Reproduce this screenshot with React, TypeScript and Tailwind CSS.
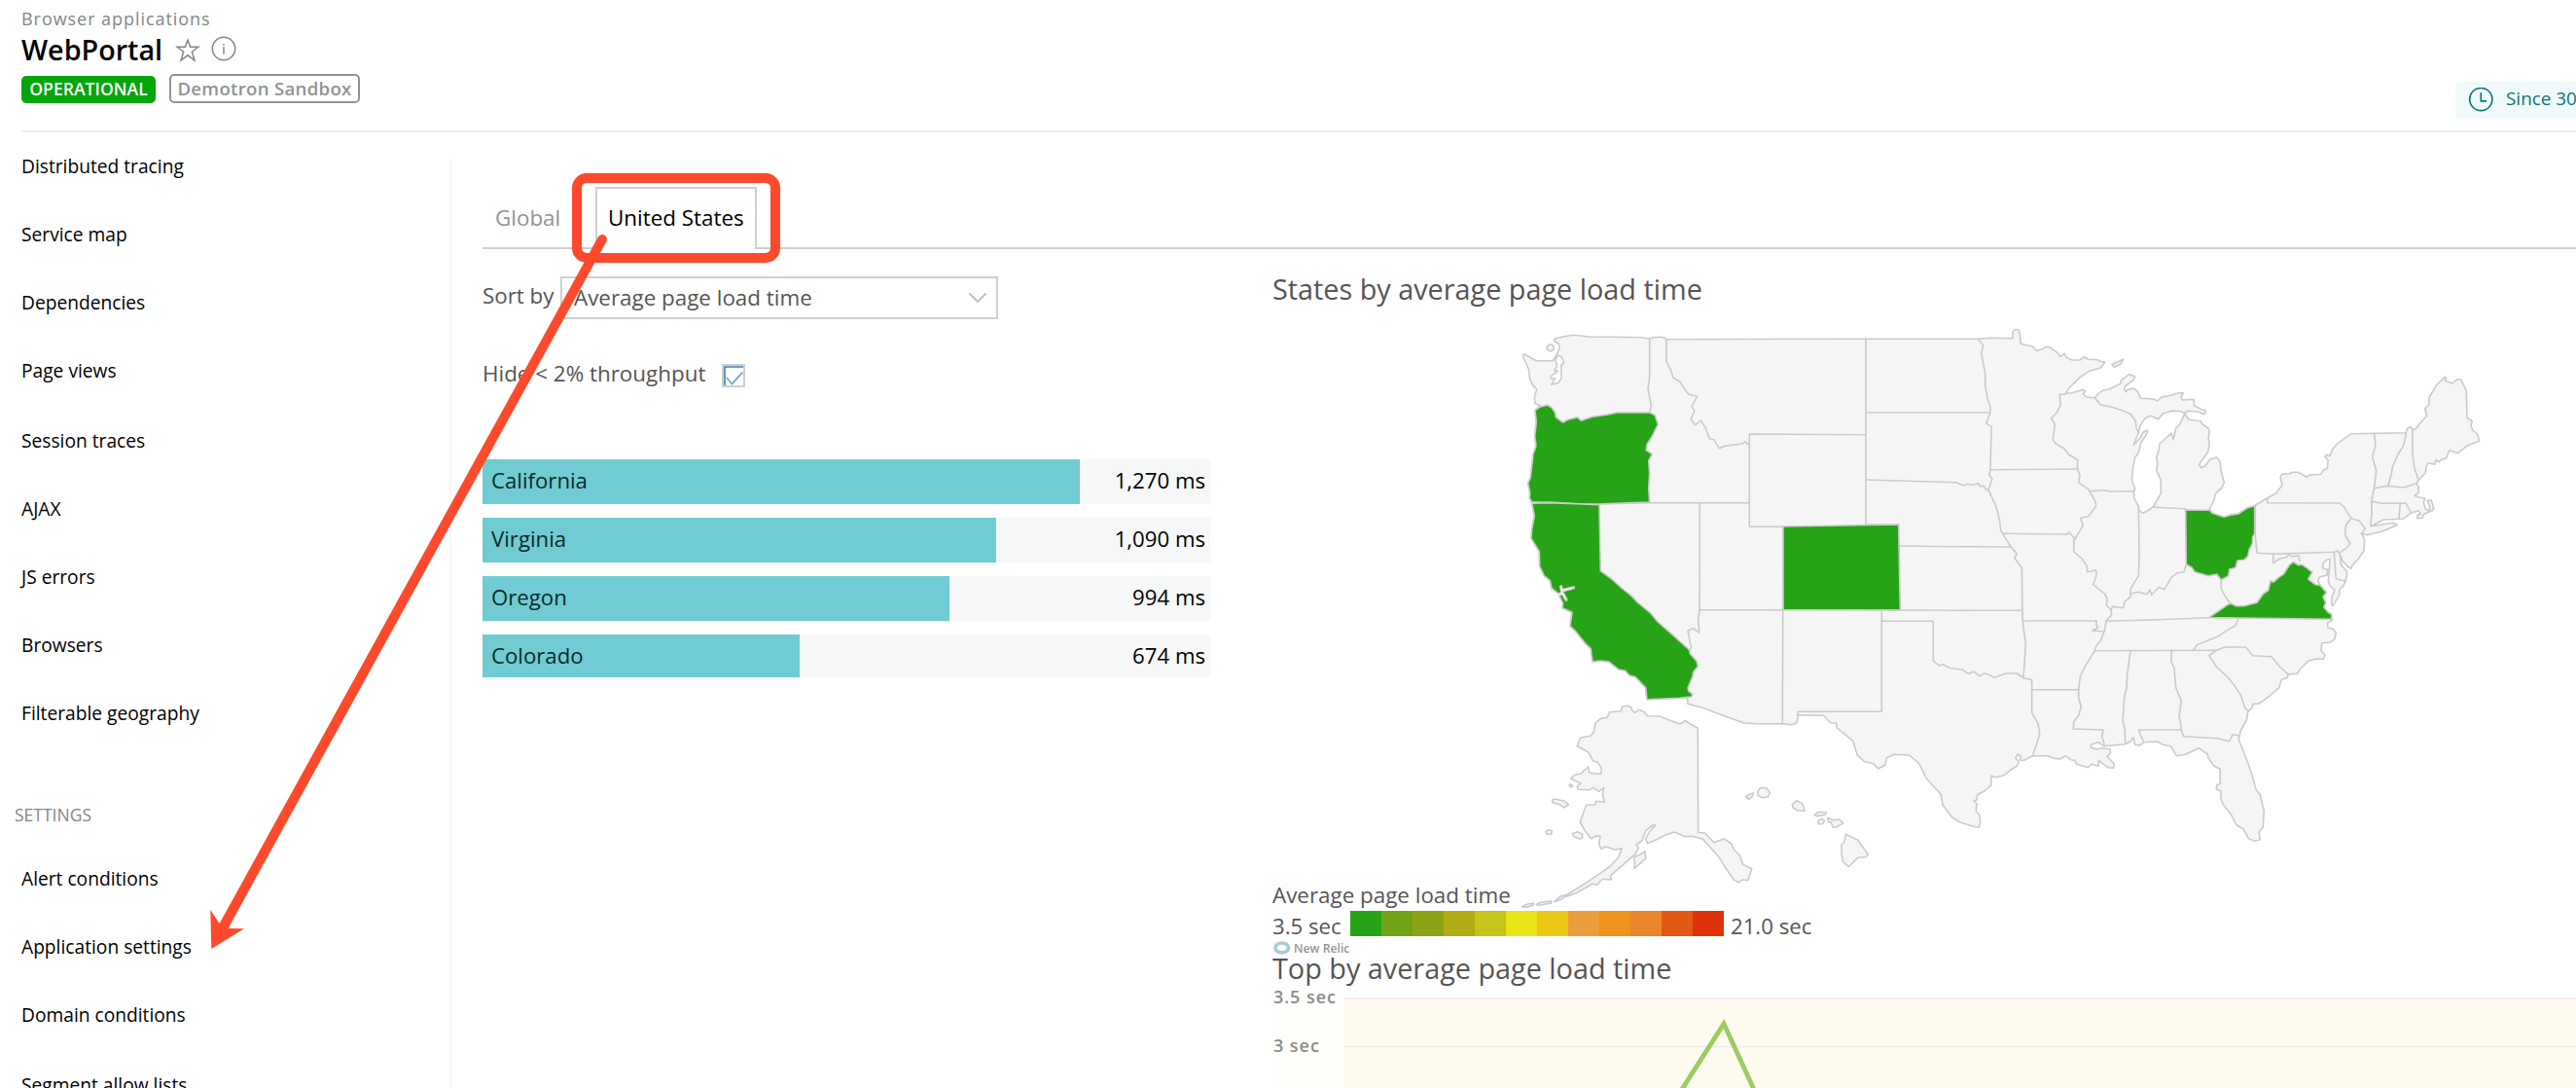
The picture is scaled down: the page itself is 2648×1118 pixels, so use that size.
import type { ReactNode } from "react";

/* ------------------------------------------------------------------ */
/* US map geometry                                                     */
/* ------------------------------------------------------------------ */

type Tile = { x: number; y: number; sx: number; sy: number };

// The outline data is stored in tiles, each with its own origin and scale.
const west: Tile = { x: 1540, y: 320, sx: 1 / 3, sy: 1 / 3 };
const central: Tile = { x: 1880, y: 320, sx: 1 / 3, sy: 1 / 3 };
const northeast: Tile = { x: 2200, y: 320, sx: 1 / 3, sy: 1 / 3 };
const southeast: Tile = { x: 2060, y: 560, sx: 1 / 3, sy: 1 / 3 };
const south: Tile = { x: 1540, y: 700, sx: 0.3699, sy: 1 / 3 };

function pts(tile: Tile, data: string): string {
  return data
    .trim()
    .split(/\s+/)
    .map((pair) => {
      const [px, py] = pair.split(",").map(Number);
      return `${(tile.x + px * tile.sx).toFixed(1)},${(tile.y + py * tile.sy).toFixed(1)}`;
    })
    .join(" ");
}

const mainland = [
  pts(west, "172,88 178,83 200,78 230,73 255,75 280,78 360,79 440,80 467,84 480,80 500,79 512,81 519,86"),
  pts(
    central,
    "0,85 460,85 500,82 566,83 568,62 573,56 584,56 588,66 592,100 628,108 640,121 655,118 668,109 680,110 694,120 704,126 713,138 720,136 726,130 733,142 750,150 775,150 787,140 800,148 830,149 836,154 852,156 838,174 803,184 775,203 745,232 730,252 748,252 784,241 790,246 784,254 795,264 820,266 830,254 848,242 864,240 899,223 902,212 926,194 944,201 938,213 914,230 911,240 916,248 922,241 940,238 952,246 962,268 1000,270 1014,276 1025,264 1048,260 1080,251",
  ),
  pts(
    northeast,
    "133,251 126,265 130,273 165,271 167,290 190,303 200,304 202,312 196,317 180,310 150,307 138,312 138,316 150,333 188,339 190,346 210,360 214,372 210,388 214,412 208,436 185,466 182,474 188,482 200,476 216,456 236,450 246,462 250,495 259,527 253,542 232,562 228,582 214,609 222,622 258,634 280,626 303,623 330,606 355,598 392,575 420,560 438,535 432,510 438,502 460,500 468,496 487,496 515,511 522,504 557,502 564,490 577,484 580,458 570,448 574,442 584,446 594,424 610,406 650,377 820,374 824,360 834,356 840,366 852,360 865,342 884,322 878,300 890,288 891,266 913,228 940,202 944,206 940,213 962,222 978,209 990,211 1006,245 1008,328 1024,338 1020,350 1025,366 1040,378 1046,400 1010,413 980,437 953,428 944,452 926,458 922,464 912,458 908,472 888,467 882,478 880,498 862,516 852,530 859,542 858,560 846,568 862,574 878,575 874,590 880,610 890,614 894,603 886,582 898,582 905,606 900,614 876,624 870,637 854,638 856,626 866,626 858,614 834,622 810,640 750,642 712,662 750,656 780,652 792,658 770,668 745,679 700,689 682,684 692,703 690,738 672,764 656,780 650,793 640,786 625,770 617,752",
  ),
  pts(
    southeast,
    "1038,45 1040,62 1056,80 1058,94 1048,125 1034,138 1034,155 1014,188 1010,184 1011,160 1020,140 1005,125 1000,110 1003,78 1006,44 996,44 984,58 984,72 998,76 996,94 975,98 968,110 975,124 994,146 984,160 992,178 986,192 1000,208 1010,214 1012,232 998,240 998,256 1014,258 1024,270 1020,290 1006,300 980,302 978,325 990,340 984,352 966,350 938,358 914,382 904,397 878,398 872,410 856,415 848,440 820,465 785,490 768,490 765,502 753,512 748,540 730,572 724,600 740,640 762,700 778,755 790,770 802,820 799,870 786,885 790,908 775,913 755,906 738,876 716,862 700,830 676,800 668,780 670,760 655,752 656,740 667,736 666,690 648,682 630,656 628,645 600,626 560,646 532,650 514,620 490,616 474,606 432,608 418,618 404,616 399,594 390,606 374,614 330,618 308,620 290,608 270,614 268,624 285,630 305,626 328,630 328,642 318,652 340,675 338,688 320,686 292,664 290,682 270,676 260,686 224,676 218,664 206,662 190,650 172,660 155,658 136,650 88,650 62,664 50,664 50,650 42,646 35,656 46,668 40,682 20,694 0,710",
  ),
  pts(
    south,
    "1385,296 1370,292 1370,320 1355,336 1332,350 1330,366 1322,368 1330,378 1328,402 1338,412 1340,436 1336,450 1326,449 1285,436 1262,420 1236,382 1230,348 1190,300 1170,254 1142,228 1100,226 1080,236 1076,258 1056,270 1044,254 1018,248 998,228 986,184 942,144 940,130 924,128 904,106 834,104 830,128 816,134 790,131 720,131 684,129 600,95 575,84 527,70 526,52",
  ),
  pts(
    west,
    "560,1192 510,1194 459,1196 455,1160 424,1127 405,1122 392,1108 372,1104 342,1080 315,1077 291,1080 286,1040 270,1025 238,985 222,970 228,928 198,914 200,900 186,870 165,853 160,830 142,815 128,785 127,740 102,700 104,670 112,630 104,592 97,575 98,560 92,530 100,512 108,440 117,415 113,385 118,340 114,305 130,290 114,284 112,265 116,250 120,240 108,230 97,206 95,180 76,138 80,131 118,152 168,152 182,132 190,108 186,98 176,94",
  ),
].join(" ");

const water = [
  pts(
    central,
    "955,373 960,352 975,330 992,322 1016,332 1030,315 1060,306 1086,308 1098,314 1084,345 1070,360 1062,395 1056,376 1040,390 1020,408 1018,425 1010,450 1014,470 1010,490 1024,520 1024,560 1002,600 990,610 970,622 958,616 955,600 942,578 940,560 944,545 934,520 938,480 944,450 955,435 962,405 980,378 983,366 970,372 960,390 940,412 946,395",
  ),
  pts(west, "184,136 176,150 182,168 174,182 184,184 162,200 164,208 176,206 164,226 186,220 196,205 194,166 203,158 196,140"),
];

const islands = [
  pts(west, "150,110 160,101 170,105 172,118 162,123 152,118"),
  pts(central, "873,163 890,156 909,147 900,162 880,172"),
  pts(
    south,
    "345,78 360,76 370,80 372,90 380,97 390,88 405,94 415,107 450,108 475,120 500,130 506,132 520,122 555,145 556,466 575,468 600,497 628,486 648,500 655,518 672,538 680,565 705,578 694,614 680,612 668,620 655,612 630,572 612,540 568,486 540,478 520,479 490,465 465,474 440,488 415,500 410,486 420,465 437,444 430,444 410,460 400,492 384,504 390,514 382,532 345,568 312,600 315,612 290,610 274,628 262,625 215,654 190,664 185,662 240,625 310,572 334,544 344,515 325,520 300,510 286,517 280,500 284,478 272,477 258,485 242,462 228,434 245,382 270,380 272,370 296,373 290,350 294,328 280,340 265,328 255,335 222,334 220,323 230,315 202,300 212,289 230,285 250,263 254,283 286,286 287,268 276,250 264,246 250,218 220,200 228,175 258,168 266,155 270,130 285,115 303,112 310,95 342,92",
  ),
  pts(south, "150,366 158,363 185,370 196,380 182,390 172,380 152,374"),
  pts(south, "198,318 206,320 206,326 199,324"),
  pts(south, "132,464 140,458 150,462 148,472 136,472"),
  pts(south, "206,470 220,464 234,472 234,484 226,486 212,480"),
  pts(south, "408,524 410,546 396,560 378,578 380,566 378,542 396,534"),
  pts(south, "156,680 175,662 186,660 180,670 160,679"),
  pts(south, "106,688 120,681 148,678 148,684 112,691"),
  pts(south, "66,696 80,688 99,685 98,690 80,697"),
  pts(south, "688,356 700,348 709,345 706,356 696,364"),
  pts(south, "722,338 730,328 746,329 756,344 750,356 734,359 722,352"),
  pts(south, "817,380 830,368 846,378 852,400 832,398 820,390"),
  pts(south, "878,412 890,403 912,404 908,412 886,416"),
  pts(south, "890,430 898,424 907,430 902,440 890,440"),
  pts(south, "916,421 930,428 948,426 959,437 940,450 930,450 926,436 918,434"),
  pts(south, "966,472 1000,490 1014,512 1028,534 1022,542 1000,544 974,572 958,556 954,530 954,505 962,496"),
];

const borders = [
  pts(west, "467,84 467,200 462,240 472,290 468,312"),
  pts(west, "519,86 519,155 530,175 540,205 560,216 575,240 588,256 614,262 597,292 606,308 594,332 608,350 625,336 640,360 652,392 665,395 682,422 700,415 752,408 762,402 775,412"),
  pts(west, "467,590 775,590"),
  pts(west, "1134,380 775,378 775,664 879,664"),
  pts(west, "312,594 467,590"),
  pts(west, "622,592 621,920 617,950 620,990 602,977 585,984 590,1008 592,1025 596,1034 592,1044"),
  pts(west, "621,920 1614,922"),
  pts(west, "879,664 878,920 877,1271"),
  pts(central, "114,85 114,657"),
  pts(central, "114,312 497,312"),
  pts(central, "114,519 392,527 418,538 424,532 440,535 462,531 468,540 478,538 484,548 492,550"),
  pts(central, "114,657 215,657"),
  pts(central, "215,723 400,725 560,726"),
  pts(central, "163,922 163,1234 -96,1234 -96,1246"),
  pts(central, "163,955 322,955 322,1077 340,1092 352,1088 375,1100 412,1104 430,1117 448,1110 464,1124 480,1116 494,1120 510,1129 545,1116 580,1116 602,1130 626,1136 626,1166 770,1166"),
  pts(
    central,
    "460,85 476,104 470,130 482,190 482,230 490,270 498,295 497,315 485,345 502,356 500,400 498,487 494,505 504,515 492,550 515,600 526,640 530,675 560,724 580,747 572,760 595,790 597,950 607,1025 600,1130",
  ),
  pts(central, "498,488 768,486"),
  pts(
    central,
    "730,255 712,256 714,290 705,308 686,330 697,348 691,395 700,408 725,422 740,442 768,458 766,480 774,508 770,528 800,548 822,586 824,600 800,632 776,637 784,660 772,680 756,705 755,740 780,762 796,785 797,803 824,797 825,815 815,842 850,870 858,885 856,905 870,920 872,935 855,955 850,985 838,1015 825,1030 820,1046 790,1095 775,1125 770,1166 770,1190 778,1218 770,1245 755,1265 754,1287 846,1290 842,1310 850,1338",
  ),
  pts(central, "803,554 850,551 870,555 942,554"),
  pts(central, "820,266 838,288 870,294 900,304 930,316 946,338 948,360 955,375"),
  pts(central, "536,685 736,687 740,680 758,700"),
  pts(central, "598,954 826,954 824,965 830,975 812,984 848,987"),
  pts(central, "855,955 1020,950 1172,944"),
  pts(central, "820,1046 1195,1045"),
  pts(central, "955,600 957,750 955,815 930,856 930,880 912,895 908,914 875,910 870,920"),
  pts(central, "930,870 956,865 980,872 990,858 995,874 1018,850 1035,857 1056,820 1075,806 1095,803 1102,780"),
  pts(northeast, "42,604 90,606 140,608 140,612"),
  pts(southeast, "722,228 715,248 690,262 660,282 630,294 595,308 584,325"),
  pts(southeast, "655,325 680,315 745,315 768,341 825,344 850,375 878,400"),
  pts(southeast, "655,325 633,341 655,375 690,408 712,435 730,462 742,500 753,512"),
  pts(southeast, "390,326 380,400 378,440 371,470 366,540 373,570 374,612"),
  pts(southeast, "516,326 516,360 525,380 530,440 547,480 540,530 546,555 547,570 554,590 660,596 695,606 705,584 724,588"),
  pts(southeast, "547,570 415,570 430,606"),
  pts(southeast, "86,448 86,518 105,550 110,582 102,610 88,650"),
  pts(southeast, "670,108 670,135 680,155 696,178"),
  pts(northeast, "355,598 355,690 360,745 410,748 600,742 610,738 617,752"),
  pts(northeast, "392,575 392,590 616,591 628,602 650,638 634,660 632,690 648,716 635,730 618,742"),
  pts(northeast, "598,742 604,824 634,832"),
  pts(northeast, "410,748 410,776 430,762 450,758 458,750 470,756 488,752 492,770"),
  pts(northeast, "650,638 675,645 694,670 684,684"),
  pts(northeast, "722,378 726,410 716,450 728,490 722,540 714,580 714,625 710,660"),
  pts(northeast, "820,374 816,400 810,418 795,440 778,480 775,500 765,536"),
  pts(northeast, "840,366 840,440 845,480 858,520"),
  pts(northeast, "722,545 765,538 800,542 815,542 852,530"),
  pts(northeast, "715,586 745,592 800,592 820,592 828,608 836,620"),
  pts(northeast, "802,592 798,640"),
];

const shaded = [
  // Oregon
  pts(
    west,
    "114,305 130,294 152,289 165,296 176,312 178,326 200,342 215,334 245,326 256,337 290,325 335,319 370,311 468,312 484,320 493,348 475,385 459,410 457,428 475,440 464,460 467,500 464,545 467,588 400,590 310,594 260,594 160,588 104,588 97,575 98,560 92,530 100,512 108,440 117,415 113,385 118,340",
  ),
  // California
  pts(
    west,
    "104,592 160,590 258,594 312,596 316,800 350,825 380,852 410,876 430,897 470,930 492,957 530,990 590,1044 592,1055 612,1078 616,1094 602,1112 600,1125 585,1160 587,1170 600,1180 596,1188 560,1192 510,1194 459,1196 455,1160 424,1127 405,1122 392,1108 372,1104 342,1080 315,1077 291,1080 286,1040 270,1025 238,985 222,970 228,928 198,914 200,900 186,870 165,853 160,830 142,815 128,785 127,740 102,700 104,670 112,630",
  ),
  // Colorado
  "1833,541 1951.7,539 1953.3,626.7 1833,626.7",
  // Ohio
  pts(
    northeast,
    "140,612 214,613 222,622 258,634 280,628 303,624 330,606 353,599 353,685 347,695 346,715 336,735 332,755 320,766 300,768 294,790 275,795 272,815 250,828 236,810 210,815 168,803 160,790 142,780",
  ),
  // Virginia
  pts(
    southeast,
    "632,224 690,184 700,180 715,188 740,188 780,178 800,150 815,140 822,110 830,115 850,98 862,90 880,62 892,52 908,62 918,60 930,68 951,84 938,105 960,122 975,124 994,146 984,160 992,178 986,192 1000,208 1010,214 1010,229 900,227 722,225",
  ),
];

function StatesMap() {
  return (
    <svg viewBox="1308 330 1340 580" className="block h-[580px] w-[1340px] overflow-visible" fill="none" strokeLinejoin="round" strokeLinecap="round">
      <g stroke="#cacaca" strokeWidth="1.6">
        <polygon points={mainland} fill="#f5f5f5" />
        {islands.map((p, i) => (
          <polygon key={i} points={p} fill="#f5f5f5" />
        ))}
        {borders.map((p, i) => (
          <polyline key={i} points={p} />
        ))}
        {water.map((p, i) => (
          <polygon key={i} points={p} fill="#fff" />
        ))}
        {shaded.map((p, i) => (
          <polygon key={i} points={p} fill="#27a317" />
        ))}
      </g>
      <path d="M1604.6 602.8 L1606 609 L1610 616.3 M1607 606.5 L1617.5 603.8 M1603 611 L1606 609" stroke="#cdcdcd" strokeWidth="3.4" />
      <path d="M1604.8 604 L1606 609 L1609.2 615 M1607 606.5 L1616 604.3 M1601 612 L1605 609.5" stroke="#fff" strokeWidth="1.2" />
    </svg>
  );
}

/* ------------------------------------------------------------------ */
/* Page parts                                                          */
/* ------------------------------------------------------------------ */

function Header() {
  return (
    <header className="ml-[22px] flex h-[136px] shrink-0 justify-between border-b-2 border-[#ededed]">
      <div>
        <div className="mt-[7px] h-6 text-[18px] leading-6 tracking-[0.95px] text-[#7f8786]">Browser applications</div>
        <div className="flex h-10 items-center">
          <h1 className="text-[28.7px] leading-10 font-semibold text-black">WebPortal</h1>
          <svg viewBox="0 0 26 26" className="ml-[13px] h-[26px] w-[26px]" fill="none" stroke="#7f8786" strokeWidth="1.5">
            <path d="M13 3 L15.6 10.3 L23.8 10.3 L17.4 15.2 L20 24 L13 18.8 L6 24 L8.6 15.2 L2.2 10.3 L10.4 10.3 Z" />
          </svg>
          <svg viewBox="0 0 26 26" className="mb-[2px] ml-[11px] h-[26px] w-[26px]" fill="none" stroke="#7f8786" strokeWidth="1.5">
            <circle cx="13" cy="13" r="11.7" />
            <path d="M13 11.2 V18.6 M13 8 V9.7" />
          </svg>
        </div>
        <div className="mt-[5px] flex h-[30px] items-end gap-[14px]">
          <span className="h-7 w-[138px] rounded-[5px] bg-[#00a60a] text-center text-[17.6px] leading-[26px] font-semibold text-white">OPERATIONAL</span>
          <span className="h-[30px] w-[196px] rounded-[5px] border-2 border-[#8e9494] text-center text-[18.6px] leading-[26px] font-semibold tracking-[0.3px] text-[#8e9494]">
            Demotron Sandbox
          </span>
        </div>
      </div>
      <div className="mt-[84px] flex h-[38px] w-[124px] items-center overflow-hidden rounded-l-md bg-[#f0fafb] pl-[13px] whitespace-nowrap">
        <svg viewBox="0 0 26 26" className="h-[26px] w-[26px] shrink-0" fill="none" stroke="#0d7377" strokeWidth="1.6">
          <circle cx="13.3" cy="12" r="11.6" />
          <path d="M13.3 5 V13.9 H19" />
        </svg>
        <span className="mb-1 ml-[13px] text-[18.9px] leading-8 text-[#0d7377]">Since 30</span>
      </div>
    </header>
  );
}

function NavItem({ children, tall }: { children: ReactNode; tall?: boolean }) {
  return <a className={`block text-[19.2px] leading-[30px] text-black ${tall ? "mb-[42px]" : "mb-10"}`}>{children}</a>;
}

function Sidebar() {
  return (
    <nav className="flex h-full w-[464px] shrink-0 flex-col pt-[26px]">
      <div className="-mt-[6.5px] pl-[22px]">
        <NavItem>Distributed tracing</NavItem>
        <NavItem>Service map</NavItem>
        <NavItem>Dependencies</NavItem>
        <NavItem tall>Page views</NavItem>
        <NavItem>Session traces</NavItem>
        <NavItem>AJAX</NavItem>
        <NavItem>JS errors</NavItem>
        <NavItem>Browsers</NavItem>
        <NavItem>Filterable geography</NavItem>
      </div>
      <div className="mt-[34px] mb-[51px] pl-[15px] text-[17.5px] leading-[30px] text-[#7f8786]">SETTINGS</div>
      <div className="-mt-[15px] pl-[22px]">
        <NavItem>Alert conditions</NavItem>
        <NavItem>Application settings</NavItem>
        <NavItem tall>Domain conditions</NavItem>
        <NavItem>Segment allow lists</NavItem>
      </div>
    </nav>
  );
}

function Tabs() {
  return (
    <div className="ml-8 flex h-16 border-b-2 border-[#cfcfcf] text-[22.4px] leading-[64px]">
      <span className="w-[116px] pl-[13px] text-[#8e9494]">Global</span>
      <span className="h-16 w-[166px] border-2 border-b-0 border-[#cfcfcf] bg-white pl-[11px] leading-[60px] text-black">United States</span>
    </div>
  );
}

const rows = [
  { name: "California", value: "1,270 ms", bar: "h-[46px] w-[614px]", row: "h-[46px]" },
  { name: "Virginia", value: "1,090 ms", bar: "h-[46px] w-[528px]", row: "h-[46px]" },
  { name: "Oregon", value: "994 ms", bar: "h-[46px] w-[480px]", row: "h-[46px]" },
  { name: "Colorado", value: "674 ms", bar: "h-[44px] w-[326px]", row: "h-[44px]" },
];

function Ranking() {
  return (
    <section className="w-[812px] shrink-0 pl-8 text-[22.3px] text-[#555]">
      <div className="mt-7 flex h-11 items-start">
        <span className="w-20 leading-10">Sort by</span>
        <div className="flex h-11 w-[450px] items-center justify-between border-2 border-[#cfcfcf] pr-[8px] pl-3">
          <span className="text-[22.4px] leading-[38px]">Average page load time</span>
          <svg viewBox="0 0 22 14" className="h-[14px] w-[22px]" fill="none" stroke="#bdbdbd" strokeWidth="1.8">
            <path d="M2.5 2.5 L11 11 L19.5 2.5" />
          </svg>
        </div>
      </div>
      <div className="mt-[36px] flex h-10 items-center">
        <span className="w-[246px] text-[22.4px] leading-10">Hide &lt; 2% throughput</span>
        <span className="mt-1 block h-6 w-6 border-2 border-[#cfcfcf]">
          <svg viewBox="0 0 20 20" className="block h-5 w-5" fill="none">
            <path d="M1 20 V1 H20" stroke="#3d7fa6" strokeWidth="1.6" />
            <path d="M3 12 L8.5 18.5 L19.5 6.5" stroke="#7ea9c9" strokeWidth="1.9" />
          </svg>
        </span>
      </div>
      <div className="mt-[68px] flex w-[748px] flex-col gap-[14px] text-[22.2px]">
        {rows.map((r) => (
          <div key={r.name} className={`flex justify-between bg-[#f6f8f8] leading-[43px] ${r.row}`}>
            <span className={`bg-[#70ccd2] pl-[9px] text-[#0b282b] ${r.bar}`}>{r.name}</span>
            <span className="pr-[5px] text-black">{r.value}</span>
          </div>
        ))}
      </div>
    </section>
  );
}

const scale = [
  "bg-[#27a317]", "bg-[#71a317]", "bg-[#8ca317]", "bg-[#b1ab15]", "bg-[#c4c41a]", "bg-[#e9e416]",
  "bg-[#ebc815]", "bg-[#ec9e3c]", "bg-[#ee931d]", "bg-[#e9852d]", "bg-[#e15814]", "bg-[#df320b]",
];

function MapPanel() {
  return (
    <section className="flex w-[1340px] shrink-0 flex-col text-[22.2px] text-[#555]">
      <h2 className="mt-[21px] text-[28.8px] leading-10">States by average page load time</h2>
      <div className="mt-[13px] h-[575px]">
        <StatesMap />
      </div>
      <div className="relative h-[31px] text-[22.4px] leading-[29px]">Average page load time</div>
      <div className="flex h-[26px] leading-[31px]">
        <span className="w-20">3.5 sec</span>
        {scale.map((c) => (
          <span key={c} className={`w-8 ${c}`} />
        ))}
        <span className="pl-[7px]">21.0 sec</span>
      </div>
      <div className="flex h-[24px] items-center">
        <svg viewBox="0 0 20 16" className="h-4 w-5" fill="none">
          <ellipse cx="9.7" cy="8" rx="6.8" ry="5" stroke="#a9cbd3" strokeWidth="3.6" />
        </svg>
        <span className="mt-px ml-[2px] text-[12.2px] leading-4 font-semibold text-[#949494]">New Relic</span>
      </div>
      <h2 className="-mt-[11px] text-[28.8px] leading-10">Top by average page load time</h2>
      <div className="-mt-[2px] flex h-[105px] overflow-hidden">
        <div className="mt-[12px] w-[73px] bg-[#fffefb] pl-px text-[18px] leading-[50px] font-semibold tracking-[0.95px] whitespace-nowrap text-[#8b8b8b]">
          <div className="-mt-[26px]">3.5 sec</div>
          <div>3 sec</div>
          <div>2.5 sec</div>
        </div>
        <svg viewBox="0 0 1267 94" className="mt-[12px] h-[94px] w-[1267px] bg-[#fefaee]" fill="none">
          <path d="M0 1 H1267 M0 50.5 H1267" stroke="#ebebee" strokeWidth="1.6" />
          <path d="M345 99 L391 27 L424 99" stroke="#9acb64" strokeWidth="4.8" />
        </svg>
      </div>
    </section>
  );
}

function Annotation() {
  return (
    <svg viewBox="0 0 2648 1118" className="pointer-events-none absolute inset-0 h-[1118px] w-[2648px]" fill="none">
      <rect x="593" y="183" width="204" height="82" rx="10" stroke="#fd4a2c" strokeWidth="10" />
      <path d="M614.6 244 A4.8 4.8 0 1 1 623.5 248 L234.5 954 L251 954.3 L217.3 975 L216.3 935 L225.6 949 Z" fill="#fd4a2c" />
    </svg>
  );
}

export default function App() {
  return (
    <div className="relative flex h-[1118px] w-[2648px] flex-col overflow-hidden bg-white font-['Open_Sans',sans-serif]">
      <Header />
      <div className="flex h-[982px]">
        <Sidebar />
        <div className="flex grow flex-col">
          <div className="flex h-[120px] items-end">
            <div className="mr-[-2px] h-[94px] w-[2px] shrink-0 -translate-x-[2px] bg-[#f7f7f7]" />
            <div className="grow">
              <Tabs />
            </div>
          </div>
          <div className="flex h-[862px]">
            <div className="mr-[-2px] h-full w-[2px] shrink-0 -translate-x-[2px] bg-[#f7f7f7]" />
            <Ranking />
            <div className="-ml-8 pl-[64px]">
              <MapPanel />
            </div>
          </div>
        </div>
      </div>
      <Annotation />
    </div>
  );
}
